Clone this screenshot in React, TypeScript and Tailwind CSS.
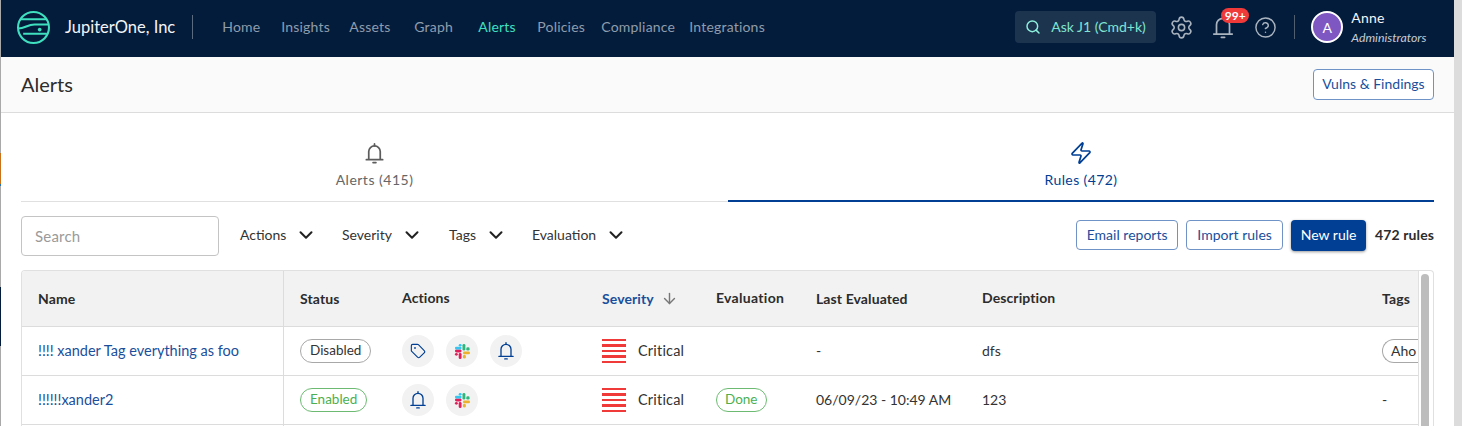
import { Search, Settings, CircleHelp, Zap, ChevronDown, ArrowDown, Tag } from "lucide-react";

const NAV_ITEMS = [
  { label: "Home", width: "w-[59px]" },
  { label: "Insights", width: "w-[68px]" },
  { label: "Assets", width: "w-[65px]" },
  { label: "Graph", width: "w-[64px]" },
  { label: "Alerts", width: "w-[59px]", active: true },
  { label: "Policies", width: "w-[64px]" },
  { label: "Compliance", width: "w-[88px]" },
  { label: "Integrations", width: "w-[80px]" },
];

const FILTERS = [
  { label: "Actions", width: "w-[102px]" },
  { label: "Severity", width: "w-[107px]" },
  { label: "Tags", width: "w-[83px]" },
  { label: "Evaluation", width: "w-[100px]" },
];

const GRID_COLS = "grid-cols-[262px_118px_200px_114px_100px_166px_1fr_36px]";

const Logo = () => (
  <svg width="33" height="33" viewBox="0 0 32 32" fill="none" stroke="#3fe0c0" strokeWidth="2">
    <circle cx="16" cy="16" r="15" />
    <path d="M3 8h26M1 17c7 0 9-4 16-4h14M6 22h23" />
    <circle cx="22" cy="18" r="1.800" fill="#3fe0c0" stroke="none" />
  </svg>
);

const BellIcon = ({ size, strokeWidth = 1.600 }: { size: number; strokeWidth?: number }) => (
  <svg width={size} height={size} viewBox="0 0 24 24" fill="none" stroke="currentColor" strokeWidth={strokeWidth} strokeLinecap="round" strokeLinejoin="round">
    <path d="M12 2v2" />
    <path d="M6 18v-8a6 6 0 0 1 12 0v8" />
    <path d="M3.500 18.500h17" />
    <path d="M10.500 21.500h3" />
  </svg>
);

const SlackIcon = () => (
  <svg width="17" height="17" viewBox="0 0 18 18">
    <rect x="1" y="7" width="7" height="3" rx="1.500" fill="#e01e5a" />
    <rect x="1" y="10.500" width="3" height="3" rx="1.500" fill="#e01e5a" />
    <rect x="5" y="10.500" width="3" height="6.500" rx="1.500" fill="#e01e5a" />
    <rect x="1" y="4" width="7" height="2.800" rx="1.400" fill="#36c5f0" />
    <rect x="5" y="1" width="3" height="2.700" rx="1.350" fill="#36c5f0" />
    <rect x="9" y="1" width="3" height="7" rx="1.500" fill="#2eb67d" />
    <rect x="13" y="4.500" width="3.500" height="3.500" rx="1.500" fill="#2eb67d" />
    <rect x="9.500" y="9" width="7.500" height="3" rx="1.500" fill="#ecb22e" />
    <rect x="9.500" y="12.500" width="3" height="4" rx="1.500" fill="#ecb22e" />
  </svg>
);

const ActionIcon = ({ children }: { children: React.ReactNode }) => (
  <span className="flex h-[32px] w-[32px] items-center justify-center rounded-full bg-[#f2f2f2] text-[#003f94]">
    {children}
  </span>
);

const SeverityCell = () => (
  <div className="flex items-center gap-[12px]">
    <span className="flex w-[24px] flex-col gap-[3px]">
      <span className="h-[2.500px] bg-[#f03a3a]" />
      <span className="h-[2.500px] bg-[#f03a3a]" />
      <span className="h-[2.500px] bg-[#f03a3a]" />
      <span className="h-[2.500px] bg-[#f03a3a]" />
      <span className="h-[2.500px] bg-[#f03a3a]" />
    </span>
    <span className="pb-[1px] text-[14.500px] tracking-[0.2px]">Critical</span>
  </div>
);

const Pill = ({ label, green, className = "px-[9px]" }: { label: string; green?: boolean; className?: string }) => (
  <span
    className={`inline-flex h-[24px] items-center rounded-full border pb-[1px] text-[13.500px] ${className} ${
      green ? "border-[#6dbb72] text-[#4caf50]" : "border-[#a8a8a8] text-[#333]"
    }`}
  >
    {label}
  </span>
);

const OutlineButton = ({ label, className }: { label: string; className: string }) => (
  <button className={`flex h-[30px] items-center justify-center rounded-[4px] border border-[#6f93c6] bg-white text-[14px] text-[#1a4f9c] ${className}`}>
    {label}
  </button>
);

const App = () => {
  return (
    <div className="flex h-[426px] w-[1462px] overflow-hidden bg-[#dcdcdc] font-['Lato','Noto_Sans',sans-serif]">
      {/* sliver of the window behind, on the left edge */}
      <div className="flex w-px shrink-0 flex-col bg-[#a9a9a9]">
        <div className="mt-[153px] h-[31px] bg-[#c8701a]" />
        <div className="h-[2px] bg-[#2a6fa8]" />
        <div className="mt-[101px] h-[59px] bg-[#041c3c]" />
      </div>
      <div className="flex w-[1453px] shrink-0 flex-col bg-white">
        {/* top nav */}
        <header className="flex h-[57px] shrink-0 items-center bg-[#041c3c] pb-[3px] pl-[16px]">
          <Logo />
          <span className="ml-[15px] text-[16.500px] text-[#f2f5f8]">JupiterOne, Inc</span>
          <span className="ml-[17px] h-[24px] w-[1px] bg-[#5a6b80]" />
          <nav className="ml-[29px] flex items-center pb-[2px] text-[14px] tracking-[0.2px] text-[#8f9dac]">
            {NAV_ITEMS.map((item) => (
              <span key={item.label} className={`${item.width} ${item.active ? "text-[#3fe0c0]" : ""}`}>
                {item.label}
              </span>
            ))}
          </nav>
          <div className="ml-[246px] flex h-[32px] w-[141px] items-center rounded-[4px] bg-[#1d344f] pl-[10px] text-[14px] text-[#7fe5d2]">
            <Search size={16} strokeWidth={2.200} className="text-[#8cf0dc]" />
            <span className="ml-[10px] pb-[1px]">Ask J1 (Cmd+k)</span>
          </div>
          <Settings size={25} strokeWidth={1.500} className="ml-[13px] text-[#aab4bf]" />
          <div className="relative ml-[16px] h-[26px] w-[26px] text-[#aab4bf]">
            <BellIcon size={26} />
            <span className="absolute -top-[6px] left-[11px] flex h-[15px] w-[28px] items-center justify-center rounded-full bg-[#f03a3a] text-[12px] font-bold text-white">
              99+
            </span>
          </div>
          <CircleHelp size={23} strokeWidth={1.500} className="ml-[18px] text-[#aab4bf]" />
          <span className="ml-[17px] h-[24px] w-px bg-[#4f5f70]" />
          <span className="ml-[16px] flex h-[32px] w-[32px] items-center justify-center rounded-full border-2 border-white bg-[#7e57c2] text-[14px] text-white">
            A
          </span>
          <div className="ml-[8px] mt-[4px] flex flex-col">
            <span className="text-[14px] leading-[18px] tracking-[0.2px] text-[#f2f5f8]">Anne</span>
            <span className="text-[12.300px] italic leading-[22px] text-[#c4ccd5]">Administrators</span>
          </div>
        </header>

        {/* page title */}
        <div className="flex h-[56px] shrink-0 items-center justify-between border-b border-[#dcdcdc] bg-[#fafafa] px-[20px]">
          <h1 className="mb-[2px] text-[20px] text-[#2c2c2c]">Alerts</h1>
          <OutlineButton label="Vulns & Findings" className="h-[31px] w-[121px] pb-[3px]" />
        </div>

        <div className="flex flex-1 flex-col px-[20px]">
          {/* tabs */}
          <div className="flex h-[89px] shrink-0">
            <div className="flex w-[707px] flex-col items-center border-b border-[#e0e0e0] pt-[29px] text-[#5c5c5c]">
              <BellIcon size={23} strokeWidth={1.800} />
              <span className="mt-[4px] text-[14px] tracking-[0.5px] text-[#666]">Alerts (415)</span>
            </div>
            <div className="flex flex-1 flex-col items-center border-b-2 border-[#003f94] pt-[28px] text-[#003f94]">
              <Zap size={24} strokeWidth={1.700} />
              <span className="mt-[4px] text-[14px] tracking-[0.4px]">Rules (472)</span>
            </div>
          </div>

          {/* toolbar */}
          <div className="mt-[14px] flex h-[40px] shrink-0 items-center">
            <div className="flex h-[40px] w-[198px] items-center rounded-[4px] border border-[#c4c4c4] pl-[13px] text-[15px] tracking-[0.2px] text-[#9a9a9a]">
              Search
            </div>
            <div className="ml-[21px] flex pb-[4px] text-[14px] text-[#333]">
              {FILTERS.map((filter) => (
                <span key={filter.label} className={`flex items-center gap-[9px] ${filter.width}`}>
                  {filter.label}
                  <ChevronDown size={22} strokeWidth={2.200} className="mt-[2px] text-[#222]" />
                </span>
              ))}
            </div>
            <div className="ml-auto flex items-center pb-[2px]">
              <OutlineButton label="Email reports" className="w-[102px] pb-[1px]" />
              <OutlineButton label="Import rules" className="ml-[8px] w-[97px] pb-[1px]" />
              <button className="ml-[8px] flex h-[31px] w-[75px] items-center justify-center rounded-[4px] bg-[#003f94] pb-[1px] text-[14px] text-white shadow-[0_1px_3px_rgba(0,0,0,0.4)]">
                New rule
              </button>
              <span className="ml-[9px] pb-[1px] text-[14px] font-bold tracking-[0.1px] text-[#2c2c2c]">472 rules</span>
            </div>
          </div>

          {/* table */}
          <div className="mt-[14px] flex h-[200px] shrink-0 overflow-hidden rounded-t-[4px] border-x border-t border-[#e0e0e0]">
            <div className="w-[1397px] shrink-0 overflow-hidden border-r border-[#e0e0e0] text-[14px] text-[#333]">
              <div className={`grid h-[56px] ${GRID_COLS} items-center border-b border-[#dcdcdc] bg-[#f2f2f2] font-bold tracking-[0.1px] text-[#2c2c2c]`}>
                <div className="flex h-full items-center border-r border-[#dcdcdc] pl-[16px]">Name</div>
                <div className="pl-[16px]">Status</div>
                <div className="pb-[2px]">Actions</div>
                <div className="flex items-center gap-[7px] text-[#1a4f9c]">
                  Severity
                  <ArrowDown size={17} className="text-[#777]" />
                </div>
                <div className="pb-[2px] tracking-[0.3px]">Evaluation</div>
                <div>Last Evaluated</div>
                <div className="pb-[2px]">Description</div>
                <div>Tags</div>
              </div>
              <div className={`grid h-[49px] ${GRID_COLS} items-center border-b border-[#dcdcdc]`}>
                <div className="flex h-full items-center border-r border-[#dcdcdc] pl-[16px] text-[14.500px] text-[#1a4f9c]">!!!! xander Tag everything as foo</div>
                <div className="pl-[16px]"><Pill label="Disabled" /></div>
                <div className="flex gap-[12px]">
                  <ActionIcon><Tag size={16} strokeWidth={1.700} /></ActionIcon>
                  <ActionIcon><SlackIcon /></ActionIcon>
                  <ActionIcon><BellIcon size={20} /></ActionIcon>
                </div>
                <SeverityCell />
                <div />
                <div className="pb-[2px]">-</div>
                <div className="pb-[2px]">dfs</div>
                <div><span className="inline-flex h-[24px] w-[36px] items-center rounded-l-full border-y border-l border-[#a8a8a8] pb-[1px] pl-[8px]">Aho</span></div>
              </div>
              <div className={`grid h-[49px] ${GRID_COLS} items-center border-b border-[#dcdcdc]`}>
                <div className="flex h-full items-center border-r border-[#dcdcdc] pl-[16px] text-[14.500px] text-[#1a4f9c]">!!!!!!xander2</div>
                <div className="pl-[16px]"><Pill label="Enabled" green /></div>
                <div className="flex gap-[12px]">
                  <ActionIcon><BellIcon size={20} /></ActionIcon>
                  <ActionIcon><SlackIcon /></ActionIcon>
                </div>
                <SeverityCell />
                <div><Pill label="Done" green className="px-[8px]" /></div>
                <div className="pb-[2px]">06/09/23 - 10:49 AM</div>
                <div className="pb-[2px]">123</div>
                <div className="pb-[2px]">-</div>
              </div>
              <div className="h-[40px] w-[262px] border-r border-[#dcdcdc]" />
            </div>
            <div className="flex-1 pl-[2px] pt-[3px]">
              <div className="h-full w-[8px] rounded-full bg-[#bdbdbd]" />
            </div>
          </div>
        </div>
      </div>
    </div>
  );
};

export default App;
